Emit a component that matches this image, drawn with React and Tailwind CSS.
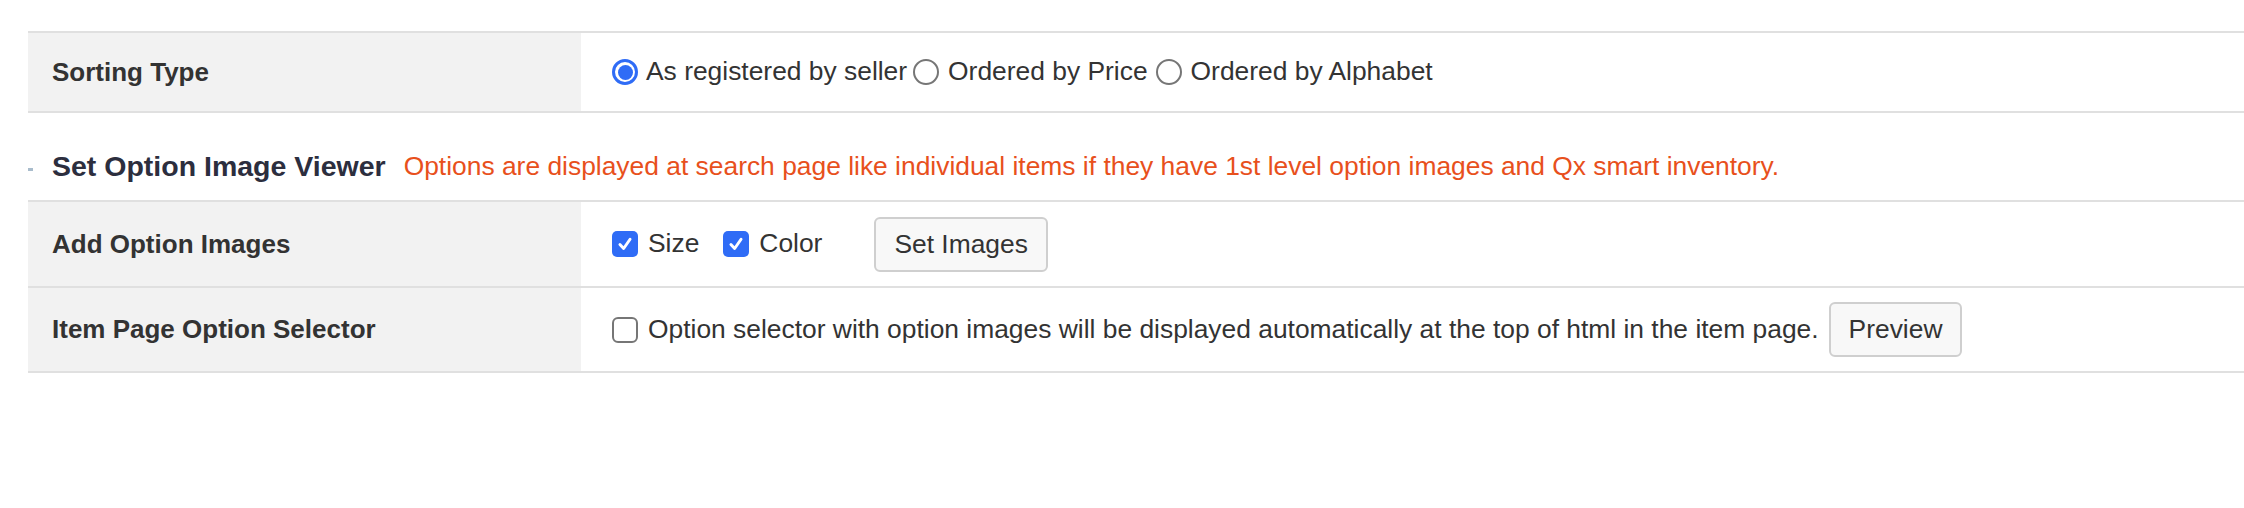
import React from 'react';

// Small form controls drawn to look like the native macOS ones in the shot
const Radio = ({ checked }) =>
  checked ? (
    <span className="w-[26px] h-[26px] rounded-full border-[3px] border-[#2f6cf6] bg-white flex items-center justify-center shrink-0">
      <span className="w-[15px] h-[15px] rounded-full bg-[#2f6cf6]" />
    </span>
  ) : (
    <span className="block w-[26px] h-[26px] rounded-full border-2 border-[#767676] bg-white shrink-0" />
  );

const Checkbox = ({ checked }) =>
  checked ? (
    <span className="w-[26px] h-[26px] rounded-[5px] bg-[#2f6cf6] flex items-center justify-center shrink-0">
      <svg width="18" height="18" viewBox="0 0 16 16" fill="none">
        <path d="M3.5 8.5 L6.8 12 L12.5 3.8" stroke="white" strokeWidth="2.6" strokeLinecap="round" strokeLinejoin="round" />
      </svg>
    </span>
  ) : (
    <span className="block w-[26px] h-[26px] rounded-[6px] border-2 border-[#767676] bg-white shrink-0" />
  );

const Button = ({ children }) => (
  <button className="h-[55px] px-[18px] border-2 border-[#cfcfcf] rounded-[6px] bg-[#f8f8f8] text-[26.4px] text-[#333] leading-none shrink-0">
    {children}
  </button>
);

const Row = ({ label, height, first, children }) => (
  <div className={`flex border-b-2 border-[#e0e0e0] ${first ? 'border-t-2' : ''}`}>
    <div className={`w-[553px] shrink-0 bg-[#f2f2f2] pl-[24px] flex items-center font-bold text-[26px] text-[#333] ${height}`}>
      {label}
    </div>
    <div className={`flex-1 flex items-center pl-[31px] text-[26.4px] text-[#333] ${height}`}>{children}</div>
  </div>
);

const App = () => {
  return (
    <div className="min-h-screen bg-white pt-[31px] pl-[28px] font-['Liberation_Sans',Arial,sans-serif]">
      <Row label="Sorting Type" height="h-[78px]" first>
        <Radio checked />
        <span className="ml-[8px]">As registered by seller</span>
        <span className="ml-[6px] flex"><Radio /></span>
        <span className="ml-[9px]">Ordered by Price</span>
        <span className="ml-[8px] flex"><Radio /></span>
        <span className="ml-[9px]">Ordered by Alphabet</span>
      </Row>

      {/* section heading with its note */}
      <div className="h-[87px] pt-[37px] flex items-start relative">
        <span className="absolute left-0 top-[55px] w-[5px] h-[3px] bg-[#a9bccc]" />
        <span className="ml-[24px] text-[28.5px] leading-[32px] font-bold text-[#2c2e3e]">Set Option Image Viewer</span>
        <span className="ml-[18px] text-[26.4px] leading-[32px] text-[#e8501c]">
          Options are displayed at search page like individual items if they have 1st level option images and Qx smart inventory.
        </span>
      </div>

      <div className="border-t-2 border-[#e0e0e0]">
        <Row label="Add Option Images" height="h-[84px]">
          <Checkbox checked />
          <span className="ml-[10px]">Size</span>
          <span className="ml-[24px] flex"><Checkbox checked /></span>
          <span className="ml-[10px]">Color</span>
          <span className="ml-[52px] flex"><Button>Set Images</Button></span>
        </Row>
        <Row label="Item Page Option Selector" height="h-[83px]">
          <Checkbox />
          <span className="ml-[10px]">Option selector with option images will be displayed automatically at the top of html in the item page.</span>
          <span className="ml-[10px] flex"><Button>Preview</Button></span>
        </Row>
      </div>
    </div>
  );
};

export default App;
